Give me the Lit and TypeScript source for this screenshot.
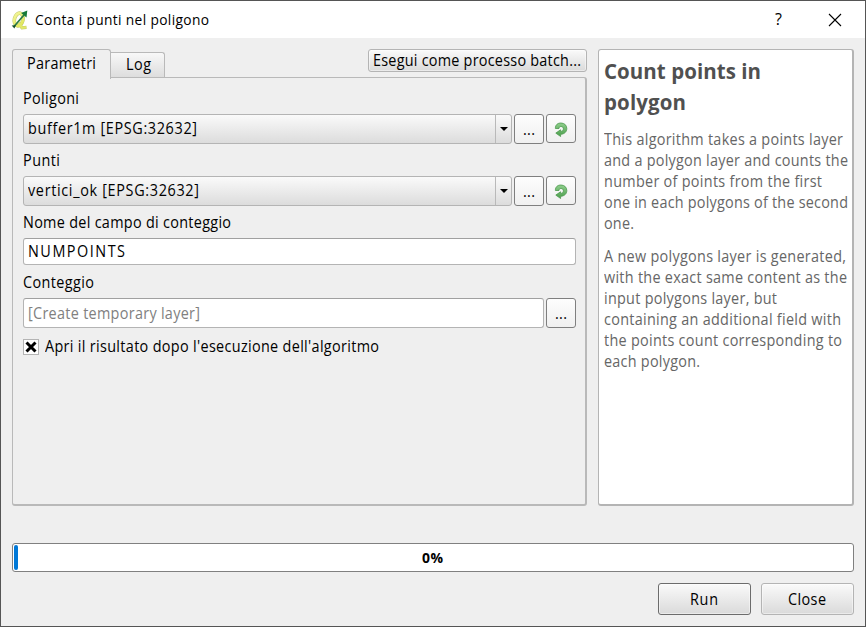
import { LitElement, html, css, svg } from "lit";
import { customElement, property } from "lit/decorators.js";

const CONDENSE = 0.93;

/** A single line of slightly condensed text whose tracking is adjusted to a given width. */
@customElement("fit-line")
class FitLine extends LitElement {
  static styles = css`
    :host { display: block; white-space: pre; flex: none; }
    span { display: inline-block; transform-origin: 0 50%; }
  `;
  @property() text = "";
  @property({ type: Number }) w = 0;

  render() {
    return html`<span>${this.text}</span>`;
  }
  firstUpdated() {
    const span = this.renderRoot.querySelector("span") as HTMLElement;
    const natural = span.getBoundingClientRect().width;
    const gap = (this.w / CONDENSE - natural) / Math.max(1, this.text.length - 1);
    span.style.letterSpacing = `${gap}px`;
    span.style.transform = `scaleX(${CONDENSE})`;
    this.style.width = `${this.w}px`;
  }
}

const line = (text: string, w: number) => html`<fit-line .text=${text} .w=${w}></fit-line>`;

const logo = svg`
  <defs><linearGradient id="q" x1="0" y1="0" x2="1" y2="1">
    <stop offset="0" stop-color="#f3f59a"/><stop offset="1" stop-color="#dfe755"/>
  </linearGradient></defs>
  <ellipse cx="7.200" cy="9.500" rx="4.300" ry="6.500" transform="rotate(14 7.200 9.500)" fill="none" stroke="#c3c96a" stroke-width="3.600"/>
  <path d="M7 13l3.500 4.800 4.500-.4" fill="none" stroke="#c3c96a" stroke-width="3.200"/>
  <ellipse cx="7.200" cy="9.500" rx="4.300" ry="6.500" transform="rotate(14 7.200 9.500)" fill="none" stroke="url(#q)" stroke-width="2.700"/>
  <path d="M7 13l3.500 4.800 4.200-.4" fill="none" stroke="#e2e869" stroke-width="2.300"/>
  <path d="M2.500 16.500L12.500 5" stroke="#2b7a44" stroke-width="1.800"/>
  <path d="M15.800 .4l-.8 7.200-5.400-4.600z" fill="#177a38"/>
  <path d="M.2 15.400l4.300-.2-1.600 3.300z" fill="#154e2c"/>`;

const refresh = html`<svg width="14" height="15" viewBox="0 0 14 15">
  <defs><linearGradient id="g" x1="0" y1="0" x2="0" y2="1">
    <stop offset="0" stop-color="#8fce8c"/><stop offset="1" stop-color="#4b9f4c"/>
  </linearGradient></defs>
  <path d="M1.400 6.500C1.200 2.800 3.800 1 6.900 1c3.500 0 5.900 2.300 5.900 5.500 0 3.400-2.400 5.600-6.200 5.800v2.200L1.800 11.100l4.800-3.300v1.600c1.700 0 2.800-.9 2.800-2.500 0-1.500-1-2.400-2.400-2.400-1.300 0-2 .8-2 2z"
    fill="url(#g)" stroke="#4b984c" stroke-width=".8"/>
</svg>`;

@customElement("app-root")
class AppRoot extends LitElement {
  static styles = css`
    :host { display: block; }
    * { box-sizing: border-box; }
    .window {
      width: 866px; height: 627px; border: 1px solid #555; background: #efefef;
      font: 15.500px/20px "Open Sans", "Noto Sans", sans-serif; color: #000;
      display: flex; flex-direction: column; overflow: hidden;
    }
    .titlebar { height: 37px; flex: none; background: #fff; display: flex; align-items: center; padding: 0 23px 0 10px; font-size: 14.800px; }
    .titlebar fit-line { padding-bottom: 2px; }
    .titlebar .logo { margin-right: 6px; }
    .titlebar .help { margin-left: auto; margin-right: 46px; font-size: 16px; padding-bottom: 2px; }
    .titlebar svg { display: block; }
    .main { display: flex; margin: 11px 11px 0; height: 457px; flex: none; gap: 11px; }
    .left { width: 575px; display: flex; flex-direction: column; }
    .tabs { display: flex; height: 28px; flex: none; align-items: flex-start; }
    .tab-on {
      width: 99px; height: 30px; border: 1px solid #b9b9b9; border-bottom: 0; border-radius: 3px 3px 0 0;
      background: #efefef; position: relative; z-index: 1; padding: 3px 0 0 14px;
    }
    .tab {
      width: 54px; height: 26px; margin-top: 3px; border: 1px solid #b9b9b9; border-left: 0; border-bottom: 0;
      border-radius: 0 3px 0 0; background: linear-gradient(#f8f8f8, #dcdcdc); padding: 1px 0 0 15px;
    }
    .btn {
      border: 1px solid #b4b4b4; border-radius: 3px; background: linear-gradient(#fafafa, #dadada);
      display: flex; align-items: center; justify-content: center; flex: none; padding: 0 2px 1px 0;
      box-shadow: inset 0 0 0 1px #ffffff70;
    }
    .batch { margin-left: auto; width: 219px; height: 23px; }
    .panel { flex: 1; border: 1px solid #b9b9b9; border-bottom-width: 2px; border-right-width: 2px; border-radius: 0 3px 3px 3px; padding: 10px 9px 0 10px; }
    .label { height: 26px; }
    .row { display: flex; gap: 2px; height: 30px; margin-bottom: 6px; }
    .combo {
      width: 489px; height: 30px; border: 1px solid #b4b4b4; border-radius: 3px; display: flex; align-items: center;
      background: linear-gradient(#fafafa, #dcdcdc); padding-left: 4px;
    }
    .combo fit-line { padding-bottom: 2px; }
    .arrow { margin-left: auto; width: 16px; height: 28px; border-left: 1px solid #b9b9b9; display: flex; align-items: center; justify-content: center; }
    .tool { width: 30px; height: 30px; border: 1px solid #7f7f7f; border-radius: 3px; background: linear-gradient(#fdfdfd, #f0f0f0); display: flex; align-items: center; justify-content: center; flex: none; }
    .tool.short { height: 29px; padding-top: 1px; }
    .input { flex: 1; border: 1px solid #b4b4b4; border-top-color: #a0a0a0; border-radius: 3px; background: #fff; display: flex; align-items: center; padding: 0 0 1px 4px; }
    .ghost { color: #808080; }
    .name { height: 27px; margin-bottom: 7px; }
    .out { margin-bottom: 10px; }
    .check { display: flex; align-items: center; gap: 6px; height: 18px; }
    .check fit-line { padding-bottom: 2px; }
    .box { width: 16px; height: 16px; border: 1px solid #b4b4b4; background: #fff; display: flex; align-items: center; justify-content: center; }
    .doc { flex: 1; background: #fff; border: 1px solid #b4b4b4; border-bottom-width: 2px; border-right-width: 2px; border-radius: 3px; padding: 5px 0 0 5px; color: #666; line-height: 21px; }
    .doc h2 { margin: 0 0 12px; font-size: 22px; line-height: 31px; color: #505050; }
    .doc p { margin: 0 0 12px; }
    .progress { flex: none; margin: 37px 11px 0; height: 29px; border: 1px solid #808080; border-radius: 3px; background: #fff; display: flex; align-items: center; justify-content: center; position: relative; font-weight: 700; font-size: 15px; padding: 0 2px 2px 0; }
    .bar { position: absolute; left: 1px; top: 1px; width: 4px; height: 25px; background: #0078d7; border-radius: 2px; }
    .actions { display: flex; justify-content: flex-end; gap: 10px; margin: 11px 11px 0; }
    .actions .btn { width: 93px; height: 32px; }
    .actions .run { border-color: #6c6c6c; }
  `;

  combo(label: string, lw: number, value: string, vw: number) {
    return html`
      <div class="label">${line(label, lw)}</div>
      <div class="row">
        <div class="combo">
          ${line(value, vw)}
          <div class="arrow"><svg width="8" height="4"><path d="M0 0h8L4 4z" /></svg></div>
        </div>
        <div class="tool">${line("...", 12)}</div>
        <div class="tool short">${refresh}</div>
      </div>`;
  }

  render() {
    return html`
      <div class="window">
        <div class="titlebar">
          <svg class="logo" width="18" height="20" viewBox="0 0 17 20">${logo}</svg>
          ${line("Conta i punti nel poligono", 174)}
          <span class="help">?</span>
          <svg width="14" height="14"><path d="M1 1l12 12M13 1L1 13" stroke="#000" stroke-width="1.1" /></svg>
        </div>
        <div class="main">
          <div class="left">
            <div class="tabs">
              <div class="tab-on">${line("Parametri", 69)}</div>
              <div class="tab">${line("Log", 25)}</div>
              <div class="btn batch">${line("Esegui come processo batch...", 208)}</div>
            </div>
            <div class="panel">
              ${this.combo("Poligoni", 56, "buffer1m [EPSG:32632]", 169)}
              ${this.combo("Punti", 37, "vertici_ok [EPSG:32632]", 171)}
              <div class="label">${line("Nome del campo di conteggio", 208)}</div>
              <div class="row name"><div class="input">${line("NUMPOINTS", 97)}</div></div>
              <div class="label">${line("Conteggio", 71)}</div>
              <div class="row out">
                <div class="input ghost">${line("[Create temporary layer]", 172)}</div>
                <div class="tool">${line("...", 12)}</div>
              </div>
              <div class="check">
                <div class="box"><svg width="12" height="12"><path d="M1.500 1.500l9 9M10.500 1.500l-9 9" stroke="#000" stroke-width="3" /></svg></div>
                ${line("Apri il risultato dopo l'esecuzione dell'algoritmo", 334)}
              </div>
            </div>
          </div>
          <div class="doc">
            <h2>${line("Count points in", 157)}${line("polygon", 82)}</h2>
            <p>
              ${line("This algorithm takes a points layer", 239)}
              ${line("and a polygon layer and counts the", 244)}
              ${line("number of points from the first", 218)}
              ${line("one in each polygons of the second", 244)}
              ${line("one.", 30)}
            </p>
            <p>
              ${line("A new polygons layer is generated,", 242)}
              ${line("with the exact same content as the", 243)}
              ${line("input polygons layer, but", 173)}
              ${line("containing an additional field with", 237)}
              ${line("the points count corresponding to", 238)}
              ${line("each polygon.", 96)}
            </p>
          </div>
        </div>
        <div class="progress"><div class="bar"></div>${line("0%", 21)}</div>
        <div class="actions">
          <div class="btn run">${line("Run", 28)}</div>
          <div class="btn">${line("Close", 38)}</div>
        </div>
      </div>`;
  }
}
